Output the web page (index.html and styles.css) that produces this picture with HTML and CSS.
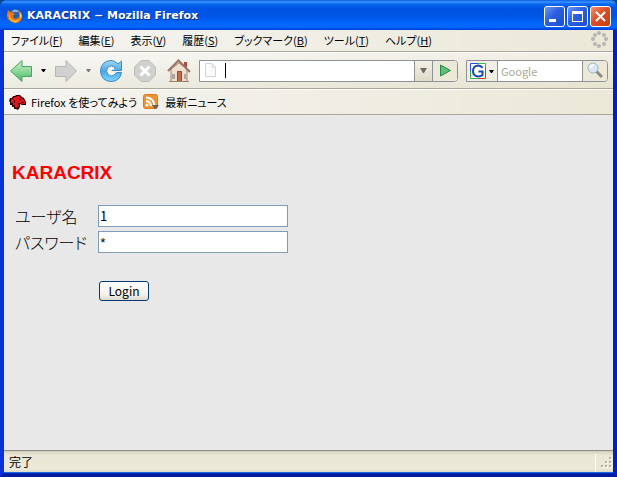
FILE: index.html
```
<!DOCTYPE html>
<html lang="ja">

<head>
    <meta charset="UTF-8">
    <meta name="viewport" content="width=device-width, initial-scale=1.0">
    <title>KARACRIX - Mozilla Firefox</title>
    <link rel="stylesheet" href="styles.css">
</head>

<body>
    <div class="window">
        <header class="titlebar">
            <svg class="app-icon" width="16" height="16" viewBox="0 0 16 16">
                <circle cx="8" cy="8" r="7" fill="#2a5dab"/>
                <path d="M5 3Q8 0 12 3Q10 5 8 4Q6 5 5 3" fill="#79b8e8"/>
                <path d="M1 2L3 4Q5 3 6 5L8 6Q6 7 6 9Q8 12 11 10Q13 8 12 5L11 2Q16 5 15 10Q13 16 7 15Q0 13 0 7Z" fill="#e87813"/>
                <path d="M2 5Q2 9 5 12Q9 14 13 11Q10 16 5 13Q1 10 2 5M13 4Q16 8 13 11Z" fill="#fbd34c"/>
            </svg>
            <h1 class="window-title">KARACRIX − Mozilla Firefox</h1>
            <div class="window-buttons">
                <button class="window-button" aria-label="最小化">
                    <svg width="19" height="19" viewBox="0 0 19 19"><path d="M4 12h7v3H4z" fill="#fff"/></svg>
                </button>
                <button class="window-button" aria-label="最大化">
                    <svg width="19" height="19" viewBox="0 0 19 19"><path d="M4 4h11v11H4zM5 7v7h9V7z" fill="#fff" fill-rule="evenodd"/></svg>
                </button>
                <button class="window-button close" aria-label="閉じる">
                    <svg width="19" height="19" viewBox="0 0 19 19"><path d="M5 5l9 9M14 5l-9 9" stroke="#fff" stroke-width="2"/></svg>
                </button>
            </div>
        </header>

        <nav class="menubar">
            <button class="menu">ファイル(<u>F</u>)</button>
            <button class="menu">編集(<u>E</u>)</button>
            <button class="menu">表示(<u>V</u>)</button>
            <button class="menu">履歴(<u>S</u>)</button>
            <button class="menu">ブックマーク(<u>B</u>)</button>
            <button class="menu">ツール(<u>T</u>)</button>
            <button class="menu">ヘルプ(<u>H</u>)</button>
            <svg class="throbber" width="17" height="17" viewBox="0 0 17 17" fill="#b5b5b2">
                <circle cx="8" cy="2" r="2"/><circle cx="13" cy="4" r="2"/>
                <circle cx="15" cy="8" r="2"/><circle cx="13" cy="13" r="2"/>
                <circle cx="8" cy="15" r="2"/><circle cx="4" cy="13" r="2"/>
                <circle cx="2" cy="8" r="2"/><circle cx="4" cy="4" r="2"/>
            </svg>
        </nav>

        <div class="toolbar">
            <button class="tool" aria-label="戻る">
                <svg width="24" height="24" viewBox="0 0 24 24">
                    <defs><linearGradient id="green" x2="0" y2="1"><stop stop-color="#c2edc4"/><stop offset=".5" stop-color="#8fd99b"/><stop offset="1" stop-color="#43b45f"/></linearGradient></defs>
                    <path d="M1.500 12L13 1.500V7.500H22.500V17.500H13V22.500Z" fill="url(#green)" stroke="#4aa565"/>
                </svg>
            </button>
            <button class="tool drop" aria-label="戻る履歴"><svg width="5" height="3" viewBox="0 0 5 3"><path d="M0 0h5L3 3H2z" fill="#000"/></svg></button>
            <button class="tool" aria-label="進む">
                <svg width="24" height="24" viewBox="0 0 24 24"><path d="M22.500 12L12 1.500V7.500H1.500V17.500H12V22.500Z" fill="#d1d1cf" stroke="#b6b6b4"/></svg>
            </button>
            <button class="tool drop" aria-label="進む履歴"><svg width="5" height="3" viewBox="0 0 5 3"><path d="M0 0h5L3 3H2z" fill="#777"/></svg></button>
            <button class="tool reload" aria-label="更新">
                <svg width="24" height="24" viewBox="0 0 24 24">
                    <defs><linearGradient id="blue" x2="0" y2="1"><stop stop-color="#a5d8f6"/><stop offset=".5" stop-color="#4ba6e2"/><stop offset="1" stop-color="#7ad6ff"/></linearGradient></defs>
                    <path d="M22.500 2V11.500H13L16 8.500Q12 5.500 9 8Q6 12 9 15.500Q12 18.500 16 15.500L17.500 13.500H22.500Q21 22.500 12 22.500Q2 22 1.500 12Q2 2 12 1.500Q16 1.500 19 5Z" fill="url(#blue)" stroke="#3c8ac6"/>
                    <path d="M15 10Q11 8 9.500 12Q11 16 15 14" fill="none" stroke="#fff" stroke-width="2"/>
                </svg>
            </button>
            <button class="tool stop" aria-label="中止">
                <svg width="24" height="24" viewBox="0 0 24 24"><path d="M8 1.500H16L22.500 8V16L16 22.500H8L1.500 16V8Z" fill="#d0d0ce" stroke="#bdbdbb"/><path d="M7.500 7.500l9 9M16.500 7.500l-9 9" stroke="#fff" stroke-width="3"/></svg>
            </button>
            <button class="tool home" aria-label="ホーム">
                <svg width="24" height="24" viewBox="0 0 24 24">
                    <path d="M17 3h3v8h-3z" fill="#b5463c"/>
                    <path d="M4 10L12 4L20 10V22.500H4Z" fill="#f0dfcd" stroke="#a78570"/>
                    <path d="M1 12L11.500 1.500L23 13" fill="none" stroke="#977468" stroke-width="2"/>
                    <path d="M10.500 12.500h4v10h-4z" fill="#c26a4c" stroke="#84503c"/>
                    <path d="M5 15h3v5H5zM17 15h2v5h-2z" fill="#aca6a6"/>
                    <path d="M2 22.500H22" stroke="#93846e"/>
                </svg>
            </button>
            <form class="address">
                <svg class="page-icon" width="13" height="15" viewBox="0 0 13 15"><path d="M1.500 .5H8L11.500 4V13.500H1.500ZM8 .5V4H11.500" fill="#fafafa" stroke="#d3d5dc"/></svg>
                <span class="caret"></span>
                <input class="address-input" type="text" aria-label="アドレス">
                <button type="button" class="address-drop" aria-label="履歴を表示"><svg width="7" height="5" viewBox="0 0 7 5"><path d="M0 0h7L4 5H3z" fill="#6b6b64"/></svg></button>
                <button type="button" class="address-go" aria-label="移動">
                    <svg width="13" height="13" viewBox="0 0 13 13"><path d="M1.500 1L11.500 6.500L1.500 12Z" fill="#5fc07b" stroke="#248745"/></svg>
                </button>
            </form>
            <form class="search">
                <button type="button" class="engine" aria-label="検索エンジン">
                    <svg width="24" height="16" viewBox="0 0 24 16">
                        <path d="M0 0h16v16H0z" fill="#fff"/>
                        <path d="M.5 8V.5H8" fill="none" stroke="#2452dc"/><path d="M8 .5H15.500V5" fill="none" stroke="#35b64a"/>
                        <path d="M15.500 5V15.500H9" fill="none" stroke="#e03127"/><path d="M9 15.500H.5V8" fill="none" stroke="#37b34a"/>
                        <path d="M12.500 5Q11 2.500 8 2.500Q3 3 3 8Q3 13 8 13.500Q11 13.500 12.500 12V8.500H8.500" fill="none" stroke="#1946b8" stroke-width="2"/>
                        <path d="M19 7h5l-2 3h-1z" fill="#000"/>
                    </svg>
                </button>
                <input class="search-input" type="text" placeholder="Google" aria-label="検索">
                <button type="button" class="search-go" aria-label="検索する">
                    <svg width="17" height="17" viewBox="0 0 17 17"><path d="M9 9l6 6" stroke="#8c8c88" stroke-width="3"/><circle cx="6" cy="6" r="5" fill="#d5e8f4" stroke="#a4b6c1"/><path d="M3 6Q4 3 7 3" fill="none" stroke="#fff" stroke-width="2"/></svg>
                </button>
            </form>
        </div>

        <div class="bookmarks">
            <a class="bookmark" href="#">
                <svg width="17" height="17" viewBox="0 0 17 17">
                    <path d="M1 4L3 4L4 2H6L7 1H11L13 3L15 4L17 8V11H13L11 10L11 13L9 16L7 15L5 15L5 13L3 13L3 11L1 11L1 8L0 7Z" fill="#300"/>
                    <path d="M2 5L4 5L5 3H7L8 2H10L12 4L14 5L16 8V10H13L11 9L9 9L10 12L8 14L6 13L6 11L4 11L4 9L2 9Z" fill="#e3131b"/>
                    <path d="M10 5h2v1h-2zM13 8h2v1h-2zM5 6h1v3H5z" fill="#300"/>
                </svg>
                Firefox を使ってみよう
            </a>
            <a class="bookmark" href="#">
                <svg width="17" height="16" viewBox="0 0 17 16">
                    <rect x=".5" y=".5" width="14" height="14" rx="2" fill="#ed9337" stroke="#d97923"/>
                    <path d="M3 3.500Q11 4 11.500 12M3 7Q7.500 7.500 8 12" fill="none" stroke="#fff" stroke-width="2"/><circle cx="4" cy="11" r="1.500" fill="#fff"/>
                    <path d="M9 11h7l-3 4h-1z" fill="#62625e"/>
                </svg>
                最新ニュース
            </a>
        </div>

        <main class="page">
            <h2 class="brand">KARACRIX</h2>
            <form class="login">
                <label for="user">ユーザ名</label>
                <input class="field" type="text" id="user" value="1">
                <label for="password">パスワード</label>
                <input class="field masked" type="text" id="password" value="*">
                <button type="button" class="submit">Login</button>
            </form>
        </main>

        <footer class="statusbar">
            <span class="status">完了</span>
            <svg class="grip" width="12" height="12" viewBox="0 0 12 12">
                <path d="M9 1h2v2H9zM5 5h2v2H5zM9 5h2v2H9zM1 9h2v2H1zM5 9h2v2H5zM9 9h2v2H9z" fill="#fff"/>
                <path d="M8 0h2v2H8zM4 4h2v2H4zM8 4h2v2H8zM0 8h2v2H0zM4 8h2v2H4zM8 8h2v2H8z" fill="#b8b4a2"/>
            </svg>
        </footer>
    </div>
</body>

</html>
```
FILE: styles.css
```
* {
    box-sizing: border-box;
}

body {
    margin: 0;
    background: #0a4a8c;
    color: #000;
    font: 11px/16px "Noto Sans CJK JP", sans-serif;
    font-feature-settings: "palt";
}

button,
input {
    font: inherit;
    font-feature-settings: inherit;
    color: inherit;
    margin: 0;
    padding: 0;
    border: 0;
    outline: 0;
    background: none;
}

button {
    display: flex;
    align-items: center;
    justify-content: center;
}

svg {
    display: block;
    flex: none;
}

.window {
    display: flex;
    flex-direction: column;
    min-height: 100vh;
    border: solid;
    border-width: 0 4px 4px;
    border-color: #0831d9 #0020c0 #001ea0 #0831d9;
    border-radius: 7px 7px 0 0;
    background: #ece9d8;
}

.titlebar {
    display: flex;
    align-items: center;
    height: 30px;
    margin: 0 -4px;
    padding: 2px 6px 0 7px;
    border-radius: 7px 7px 0 0;
    background: linear-gradient(#0a5be0, #3a93ff 2px, #0868ef 4px, #0054e3 8px, #0055e5 16px, #0068ff 24px, #0066fc 27px, #003dd6);
}

.window-title {
    flex: 1;
    margin: 0 0 0 4px;
    color: #fff;
    font: bold 11px/16px "DejaVu Sans", sans-serif;
    text-shadow: 1px 1px #0a2a8c;
}

.window-buttons {
    display: flex;
    gap: 2px;
}

.window-button {
    width: 21px;
    height: 21px;
    border: 1px solid #fff;
    border-radius: 3px;
    background: linear-gradient(135deg, #6d94f4, #2b5fe0 45%, #1c4fd0);
}

.window-button.close {
    background: linear-gradient(135deg, #f0906c, #dd5028 45%, #c63c12);
}

.menubar,
.toolbar,
.bookmarks {
    display: flex;
    align-items: center;
    border-bottom: 1px solid #aca899;
    background: linear-gradient(90deg, #f4f4f2, #ece8d8);
}

.menubar {
    height: 22px;
    gap: 16px;
    padding: 0 5px 2px 7px;
}

.menu {
    white-space: nowrap;
}

.throbber {
    margin-left: auto;
}

.toolbar {
    height: 37px;
    padding: 0 5px;
    border-top: 1px solid #fff;
    background: linear-gradient(rgba(255, 255, 255, .3), rgba(220, 216, 190, .3)), linear-gradient(90deg, #f4f4f2, #ece8d8);
}

.drop {
    width: 21px;
}

.reload,
.stop {
    margin-right: 10px;
}

.address,
.search {
    display: flex;
    align-items: stretch;
    height: 22px;
    border: 1px solid #8f9198;
    border-radius: 0 4px 4px 0;
}

.address {
    flex: 1;
    min-width: 0;
    margin: 0 8px;
    background: #fff;
}

.page-icon {
    align-self: center;
    margin: 0 8px 0 4px;
}

.caret {
    align-self: center;
    width: 1px;
    height: 15px;
    background: #000;
}

.address-input,
.search-input {
    flex: 1;
    min-width: 0;
    background: #fff;
}

.address-drop {
    width: 18px;
    border-left: 1px solid #8f9198;
    background: linear-gradient(#f3f0e6, #dfdbc9);
}

.address-go {
    width: 25px;
    border-left: 1px solid #8f9198;
    border-radius: 0 3px 3px 0;
    background: #ece9d8;
}

.search {
    width: 142px;
}

.engine {
    width: 30px;
    background: #f0eee5;
}

.search-input {
    padding-left: 3px;
    border-left: 1px solid #8f9198;
}

.search-input::placeholder {
    color: #aaa798;
    opacity: 1;
}

.search-go {
    width: 25px;
    border-left: 1px solid #8f9198;
    border-radius: 0 3px 3px 0;
    background: #ece9d8;
}

.bookmarks {
    height: 26px;
    gap: 6px;
    padding: 0 5px;
    border-top: 1px solid #fff;
}

.bookmark {
    display: flex;
    align-items: center;
    gap: 5px;
    color: #000;
    text-decoration: none;
    white-space: nowrap;
}

.page {
    flex: 1;
    padding: 46px 8px 16px;
    background: #e8e8e8;
}

.brand {
    margin: 0 0 20px;
    color: #f00;
    font: bold 19px/24px "Liberation Sans", Arial, sans-serif;
}

.login {
    display: grid;
    grid-template-columns: 80px 190px;
    gap: 4px 3px;
    align-items: center;
    padding-left: 3px;
    font-size: 16px;
    line-height: 22px;
}

.login label {
    font-weight: 300;
    white-space: nowrap;
}

.field {
    width: 100%;
    height: 22px;
    padding: 0 1px;
    border: 1px solid #7f9db9;
    background: #fff;
    font-size: 13px;
}

.masked {
    padding: 2px 0 0;
    font: 13px/16px "Liberation Mono", monospace;
}

.submit {
    grid-column: 2;
    width: 50px;
    height: 20px;
    margin: 24px 0 0 1px;
    border: 1px solid #003c74;
    border-radius: 3px;
    background: linear-gradient(#fff, #f3f2ec 70%, #dcd8cc);
    font-size: 12px;
    line-height: 16px;
}

.statusbar {
    display: flex;
    align-items: center;
    height: 23px;
    padding-left: 5px;
    border-top: 1px solid #8f8d82;
    border-bottom: 1px solid #166aee;
    background: linear-gradient(#d2cebc, #ebe7d8 4px, #ece9d8 18px, #dedac8);
}

.status {
    flex: 1;
    font-size: 12px;
}

.grip {
    align-self: flex-end;
    width: 18px;
    padding-left: 5px;
    border-left: 1px solid #fff;
    height: 18px;
}
```
